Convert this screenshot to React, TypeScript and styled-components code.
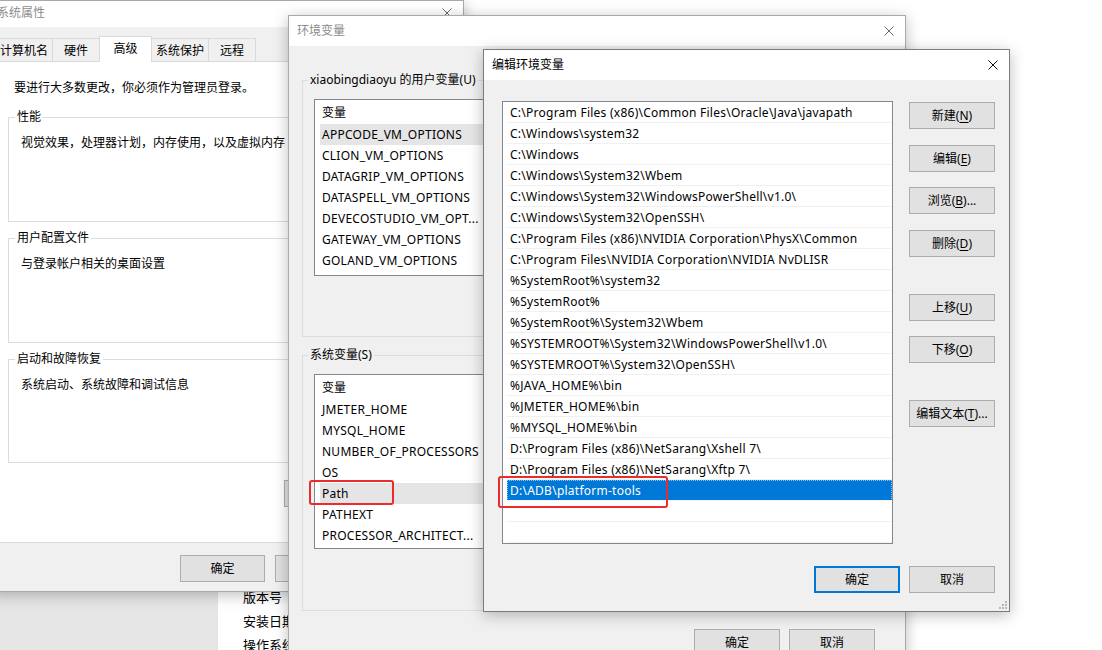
import React from 'react';
import styled, { createGlobalStyle } from 'styled-components';

const Global = createGlobalStyle`
  html, body { margin: 0; padding: 0; background: #fff; }
  body {
    font-family: "Segoe UI", "Noto Sans", "Noto Sans CJK SC", sans-serif;
    font-size: 12px;
    color: #000;
  }
  * { box-sizing: border-box; }
`;

const Desktop = styled.div`
  position: relative;
  width: 1102px;
  height: 650px;
  overflow: hidden;
  background: #fff;
`;

const Window = styled.div<{ $x: number; $y: number; $w: number; $h: number; $active?: boolean }>`
  position: absolute;
  left: ${(p) => p.$x}px;
  top: ${(p) => p.$y}px;
  width: ${(p) => p.$w}px;
  height: ${(p) => p.$h}px;
  display: flex;
  flex-direction: column;
  background: #f0f0f0;
  border: 1px solid ${(p) => (p.$active ? '#7c7c7c' : '#a9a9a9')};
  box-shadow: 0 3px 14px rgba(0, 0, 0, 0.26);
`;

const TitleBar = styled.div<{ $h: number; $pb?: number; $pl: number; $dim?: boolean }>`
  flex: none;
  height: ${(p) => p.$h}px;
  padding: 0 11px ${(p) => p.$pb || 0}px ${(p) => p.$pl}px;
  display: flex;
  align-items: center;
  background: #fff;
  color: ${(p) => (p.$dim ? '#8c8c8c' : '#000')};
  line-height: 16px;
`;

const TitleText = styled.span`
  flex: 1;
  white-space: nowrap;
`;

const CloseIcon = ({ color }: { color: string }) => (
  <svg width="10" height="10" viewBox="0 0 10 10" style={{ display: 'block' }}>
    <path d="M0.5 0.5L9.5 9.5M9.5 0.5L0.5 9.5" stroke={color} strokeWidth="1" fill="none" />
  </svg>
);

const Button = styled.div<{ $w?: number; $default?: boolean; $mt?: number }>`
  flex: none;
  width: ${(p) => p.$w || 86}px;
  height: 27px;
  margin-top: ${(p) => p.$mt || 0}px;
  display: flex;
  align-items: center;
  justify-content: center;
  background: #e1e1e1;
  border: ${(p) => (p.$default ? '2px solid #0078d7' : '1px solid #adadad')};
  white-space: nowrap;
  line-height: 16px;
  u { text-decoration: underline; text-underline-offset: 2px; }
`;

/* ---------- background settings page ---------- */
const BackPage = styled.div`
  position: absolute;
  left: -20px;
  top: 560px;
  width: 330px;
  height: 120px;
  display: flex;
  background: #fff;
`;
const BackSide = styled.div`
  width: 238px;
  background: #e6e6e6;
`;
const BackContent = styled.div`
  flex: 1;
  padding: 25px 0 0 25px;
  display: flex;
  flex-direction: column;
  font-size: 13px;
  line-height: 24px;
  color: #000;
  white-space: nowrap;
`;

/* ---------- system properties window ---------- */
const SysBody = styled.div`
  flex: 1;
  display: flex;
  flex-direction: column;
  padding: 9px 6px 0 6px;
`;
const TabStrip = styled.div`
  position: relative;
  z-index: 1;
  height: 26px;
  margin-bottom: -1px;
  display: flex;
  align-items: flex-end;
`;
const Tab = styled.div<{ $w: number; $sel?: boolean }>`
  width: ${(p) => p.$w}px;
  height: ${(p) => (p.$sel ? 26 : 24)}px;
  margin-left: -1px;
  display: flex;
  align-items: center;
  justify-content: center;
  background: ${(p) => (p.$sel ? '#fff' : '#f0f0f0')};
  border: 1px solid #d9d9d9;
  border-bottom-color: ${(p) => (p.$sel ? '#fff' : '#d9d9d9')};
  padding-bottom: ${(p) => (p.$sel ? 3 : 0)}px;
  white-space: nowrap;
  &:first-child { margin-left: 0; }
`;
const TabPanel = styled.div`
  height: 482px;
  flex: none;
  display: flex;
  flex-direction: column;
  background: #fff;
  border: 1px solid #d9d9d9;
`;
const Intro = styled.div`
  margin: 18px 0 0 18px;
  line-height: 16px;
  white-space: nowrap;
`;
const Group = styled.fieldset<{ $h: number; $mt: number; $mx: number; $pl: number; $pt: number }>`
  flex: none;
  height: ${(p) => p.$h}px;
  margin: ${(p) => p.$mt}px ${(p) => p.$mx}px 0 ${(p) => p.$mx}px;
  padding: ${(p) => p.$pt}px 11px 0 ${(p) => p.$pl}px;
  border: 1px solid #dcdcdc;
  min-width: 0;
`;
const Legend = styled.legend`
  padding: 0 2px;
  margin-left: -6px;
  line-height: 16px;
  white-space: nowrap;
`;
const GroupText = styled.div`
  line-height: 16px;
  white-space: nowrap;
  padding-top: 1px;
`;
const PanelButtonRow = styled.div`
  display: flex;
  justify-content: flex-end;
  margin: 17px 12px 0 0;
`;
const DialogButtons = styled.div<{ $mt: number; $pr: number; $gap: number }>`
  flex: none;
  display: flex;
  justify-content: flex-end;
  gap: ${(p) => p.$gap}px;
  margin-top: ${(p) => p.$mt}px;
  padding-right: ${(p) => p.$pr}px;
`;

/* ---------- environment variables window ---------- */
const EnvBody = styled.div`
  flex: 1;
  display: flex;
  flex-direction: column;
  padding: 26px 13px 0 13px;
`;
const ListBox = styled.div<{ $h: number; $w?: number }>`
  flex: none;
  height: ${(p) => p.$h}px;
  width: ${(p) => (p.$w ? `${p.$w}px` : 'auto')};
  background: #fff;
  border: 1px solid #828790;
  overflow: hidden;
`;
const ListHeader = styled.div`
  height: 24px;
  padding: 5px 0 0 7px;
  line-height: 16px;
`;
const VarRow = styled.div<{ $hl?: boolean }>`
  height: 21px;
  margin-left: 5px;
  padding: 3px 0 0 2px;
  background: ${(p) => (p.$hl ? '#e5e5e5' : 'transparent')};
  white-space: nowrap;
  line-height: 16px;
  letter-spacing: 0.25px;
`;

/* ---------- edit window ---------- */
const EditBody = styled.div`
  flex: 1;
  display: flex;
  flex-direction: column;
  padding: 21px 14px 0 18px;
  position: relative;
`;
const EditMain = styled.div`
  display: flex;
`;
const SideButtons = styled.div`
  display: flex;
  flex-direction: column;
  margin-left: 16px;
`;
const PathRow = styled.div<{ $sel?: boolean }>`
  height: 21px;
  margin-left: 4px;
  padding: 3px 0 0 3px;
  border-bottom: 1px solid #f0f0f0;
  background: ${(p) => (p.$sel ? '#0078d7' : 'transparent')};
  color: ${(p) => (p.$sel ? '#fff' : '#000')};
  outline: ${(p) => (p.$sel ? '1px dotted rgba(255,255,255,0.55)' : 'none')};
  outline-offset: -1px;
  white-space: nowrap;
  line-height: 16px;
  letter-spacing: 0.25px;
`;
const Grip = styled.div`
  position: absolute;
  right: 2px;
  bottom: 2px;
  width: 9px;
  height: 9px;
`;

const Highlight = styled.div<{ $x: number; $y: number; $w: number; $h: number }>`
  position: absolute;
  left: ${(p) => p.$x}px;
  top: ${(p) => p.$y}px;
  width: ${(p) => p.$w}px;
  height: ${(p) => p.$h}px;
  border: 2px solid #ec2b2b;
  border-radius: 3px;
  pointer-events: none;
`;

const userVars = [
  'APPCODE_VM_OPTIONS',
  'CLION_VM_OPTIONS',
  'DATAGRIP_VM_OPTIONS',
  'DATASPELL_VM_OPTIONS',
  'DEVECOSTUDIO_VM_OPT...',
  'GATEWAY_VM_OPTIONS',
  'GOLAND_VM_OPTIONS',
];
const sysVars = [
  'JMETER_HOME',
  'MYSQL_HOME',
  'NUMBER_OF_PROCESSORS',
  'OS',
  'Path',
  'PATHEXT',
  'PROCESSOR_ARCHITECT...',
];
const paths = [
  'C:\\Program Files (x86)\\Common Files\\Oracle\\Java\\javapath',
  'C:\\Windows\\system32',
  'C:\\Windows',
  'C:\\Windows\\System32\\Wbem',
  'C:\\Windows\\System32\\WindowsPowerShell\\v1.0\\',
  'C:\\Windows\\System32\\OpenSSH\\',
  'C:\\Program Files (x86)\\NVIDIA Corporation\\PhysX\\Common',
  'C:\\Program Files\\NVIDIA Corporation\\NVIDIA NvDLISR',
  '%SystemRoot%\\system32',
  '%SystemRoot%',
  '%SystemRoot%\\System32\\Wbem',
  '%SYSTEMROOT%\\System32\\WindowsPowerShell\\v1.0\\',
  '%SYSTEMROOT%\\System32\\OpenSSH\\',
  '%JAVA_HOME%\\bin',
  '%JMETER_HOME%\\bin',
  '%MYSQL_HOME%\\bin',
  'D:\\Program Files (x86)\\NetSarang\\Xshell 7\\',
  'D:\\Program Files (x86)\\NetSarang\\Xftp 7\\',
  'D:\\ADB\\platform-tools',
  '',
  '',
];

export default function App() {
  return (
    <>
      <Global />
      <Desktop>
        <BackPage>
          <BackSide />
          <BackContent>
            <span>版本号</span>
            <span>安装日期</span>
            <span>操作系统</span>
          </BackContent>
        </BackPage>

        {/* 系统属性 */}
        <Window $x={-12} $y={0} $w={476} $h={592}>
          <TitleBar $h={26} $pb={3} $pl={8} $dim>
            <TitleText>系统属性</TitleText>
            <CloseIcon color="#6a6a6a" />
          </TitleBar>
          <SysBody>
            <TabStrip>
              <Tab $w={58}>计算机名</Tab>
              <Tab $w={48}>硬件</Tab>
              <Tab $w={53} $sel>高级</Tab>
              <Tab $w={58}>系统保护</Tab>
              <Tab $w={48}>远程</Tab>
            </TabStrip>
            <TabPanel>
              <Intro>要进行大多数更改，你必须作为管理员登录。</Intro>
              <Group $h={113} $mt={13} $mx={12} $pl={12} $pt={9}>
                <Legend>性能</Legend>
                <GroupText>视觉效果，处理器计划，内存使用，以及虚拟内存</GroupText>
              </Group>
              <Group $h={113} $mt={8} $mx={12} $pl={12} $pt={9}>
                <Legend>用户配置文件</Legend>
                <GroupText>与登录帐户相关的桌面设置</GroupText>
              </Group>
              <Group $h={112} $mt={8} $mx={12} $pl={12} $pt={9}>
                <Legend>启动和故障恢复</Legend>
                <GroupText>系统启动、系统故障和调试信息</GroupText>
              </Group>
              <PanelButtonRow>
                <Button $w={160}>
                  环境变量(<u>N</u>)...
                </Button>
              </PanelButtonRow>
            </TabPanel>
            <DialogButtons $mt={12} $pr={2} $gap={10}>
              <Button $w={85}>确定</Button>
              <Button $w={85}>取消</Button>
              <Button $w={85}>应用(A)</Button>
            </DialogButtons>
          </SysBody>
        </Window>

        {/* 环境变量 */}
        <Window $x={288} $y={15} $w={618} $h={680}>
          <TitleBar $h={30} $pl={8} $dim>
            <TitleText>环境变量</TitleText>
            <CloseIcon color="#6a6a6a" />
          </TitleBar>
          <EnvBody>
            <Group $h={265} $mt={0} $mx={0} $pl={11} $pt={11}>
              <Legend>xiaobingdiaoyu 的用户变量(U)</Legend>
              <ListBox $h={177}>
                <ListHeader>变量</ListHeader>
                {userVars.map((v, i) => (
                  <VarRow key={v} $hl={i === 0}>
                    {v}
                  </VarRow>
                ))}
              </ListBox>
            </Group>
            <Group $h={264} $mt={10} $mx={0} $pl={11} $pt={11}>
              <Legend>系统变量(S)</Legend>
              <ListBox $h={175}>
                <ListHeader>变量</ListHeader>
                {sysVars.map((v) => (
                  <VarRow key={v} $hl={v === 'Path'}>
                    {v}
                  </VarRow>
                ))}
              </ListBox>
            </Group>
            <DialogButtons $mt={18} $pr={17} $gap={9}>
              <Button>确定</Button>
              <Button>取消</Button>
            </DialogButtons>
          </EnvBody>
        </Window>

        {/* 编辑环境变量 */}
        <Window $x={483} $y={49} $w={527} $h={563} $active>
          <TitleBar $h={30} $pl={8}>
            <TitleText>编辑环境变量</TitleText>
            <CloseIcon color="#111" />
          </TitleBar>
          <EditBody>
            <EditMain>
              <ListBox $h={443} $w={391}>
                {paths.map((p, i) => (
                  <PathRow key={i} $sel={i === 18}>
                    {p}
                  </PathRow>
                ))}
              </ListBox>
              <SideButtons>
                <Button $mt={1}>
                  新建(<u>N</u>)
                </Button>
                <Button $mt={16}>
                  编辑(<u>E</u>)
                </Button>
                <Button $mt={15}>
                  浏览(<u>B</u>)...
                </Button>
                <Button $mt={16}>
                  删除(<u>D</u>)
                </Button>
                <Button $mt={37}>
                  上移(<u>U</u>)
                </Button>
                <Button $mt={15}>
                  下移(<u>O</u>)
                </Button>
                <Button $mt={37}>
                  编辑文本(<u>T</u>)...
                </Button>
              </SideButtons>
            </EditMain>
            <DialogButtons $mt={22} $pr={0} $gap={9}>
              <Button $default>确定</Button>
              <Button>取消</Button>
            </DialogButtons>
            <Grip>
              <svg width="9" height="9" viewBox="0 0 9 9" style={{ display: 'block' }}>
                {[
                  [7, 1],
                  [4, 4],
                  [7, 4],
                  [1, 7],
                  [4, 7],
                  [7, 7],
                ].map(([x, y]) => (
                  <rect key={`${x}-${y}`} x={x} y={y} width="2" height="2" fill="#b8b8b8" />
                ))}
              </svg>
            </Grip>
          </EditBody>
        </Window>

        <Highlight $x={309} $y={480} $w={85} $h={25} />
        <Highlight $x={498} $y={476} $w={170} $h={32} />
      </Desktop>
    </>
  );
}
